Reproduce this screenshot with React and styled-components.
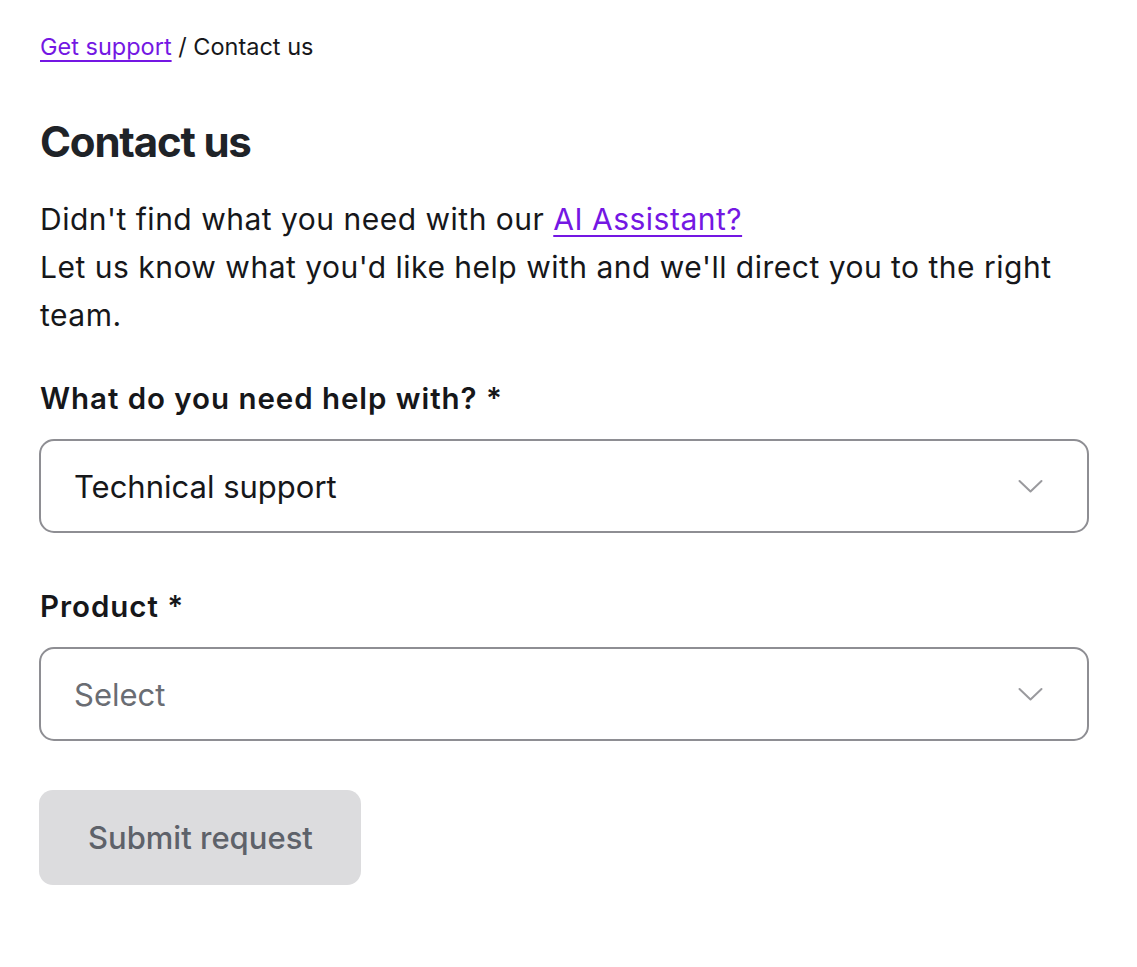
import React from "react";
import styled, { createGlobalStyle } from "styled-components";

const Global = createGlobalStyle`
  body {
    margin: 0;
    background: #fff;
    font-family: Inter, "Noto Sans", sans-serif;
    color: #16171a;
  }
`;

const Page = styled.main`
  width: 1050px;
  padding: 31px 0 40px 39px;
`;

const Crumbs = styled.nav`
  font-size: 23.5px;
  line-height: 32px;
  padding-left: 1px;
  color: #16171a;
`;

const Link = styled.a`
  color: #7417e3;
  text-decoration: underline;
  text-decoration-thickness: 2px;
  text-underline-offset: 5px;
  cursor: pointer;
`;

const Title = styled.h1`
  margin: 54px 0 0 1px;
  font-size: 42px;
  line-height: 50px;
  font-weight: 700;
  letter-spacing: -1.2px;
  color: #1f2328;
`;

const Intro = styled.p`
  margin: 28px 0 0 1px;
  font-size: 30px;
  line-height: 48px;
  letter-spacing: 0.5px;
  color: #16171a;
`;

const Form = styled.form`
  display: flex;
  flex-direction: column;
  margin-top: 41px;
`;

const Field = styled.div`
  display: flex;
  flex-direction: column;
  gap: 23px;
  margin-bottom: ${(p) => p.$after}px;
`;

const Label = styled.label`
  padding-left: 1px;
  font-size: 29.5px;
  line-height: 36px;
  font-weight: 600;
  letter-spacing: 0.95px;
  color: #16171a;
`;

const SelectBox = styled.div`
  display: flex;
  align-items: center;
  justify-content: space-between;
  height: 94px;
  box-sizing: border-box;
  padding: 0 44px 0 33px;
  border: 2px solid #8e8e93;
  border-radius: 15px;
  font-size: 31px;
  color: ${(p) => (p.$placeholder ? "#6a6d73" : "#16171a")};
`;

const Chevron = () => (
  <svg width="25" height="15" viewBox="0 0 25 15" fill="none">
    <path d="M1.5 2l11 10.5L23.5 2" stroke="#9a9a9e" strokeWidth="2" strokeLinecap="round" strokeLinejoin="round" />
  </svg>
);

const Submit = styled.button`
  align-self: flex-start;
  height: 95px;
  padding: 0 48px 0 49px;
  border: none;
  border-radius: 14px;
  background: #dcdcde;
  color: #5e626a;
  font-family: Inter, "Noto Sans", sans-serif;
  font-size: 31px;
  font-weight: 500;
  cursor: not-allowed;
`;

export default function App() {
  return (
    <>
      <Global />
      <Page>
        <Crumbs>
          <Link>Get support</Link> / Contact us
        </Crumbs>
        <Title>Contact us</Title>
        <Intro>
          Didn't find what you need with our <Link>AI Assistant?</Link>
          <br />
          Let us know what you'd like help with and we'll direct you to the right team.
        </Intro>
        <Form>
          <Field $after={55}>
            <Label>What do you need help with? *</Label>
            <SelectBox>
              Technical support
              <Chevron />
            </SelectBox>
          </Field>
          <Field $after={49}>
            <Label>Product *</Label>
            <SelectBox $placeholder>
              Select
              <Chevron />
            </SelectBox>
          </Field>
          <Submit type="button" disabled>
            Submit request
          </Submit>
        </Form>
      </Page>
    </>
  );
}
